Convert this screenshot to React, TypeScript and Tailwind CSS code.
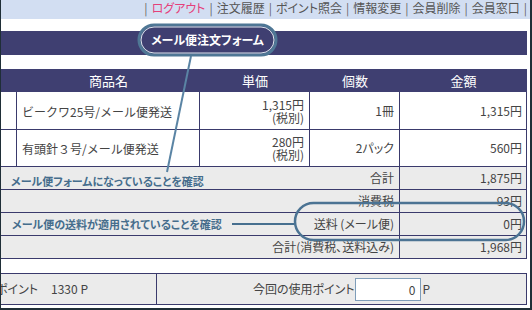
const navItems = ["ログアウト", "注文履歴", "ポイント照会", "情報変更", "会員削除", "会員窓口"];

const items = [
  { name: "ビークワ25号/メール便発送", price: "1,315円", qty: "1冊", amount: "1,315円" },
  { name: "有頭針３号/メール便発送", price: "280円", qty: "2パック", amount: "560円" },
];

const totals = [
  ["合計", "1,875円"],
  ["消費税", "93円"],
  ["送料 (メール便)", "0円"],
  ["合計(消費税、送料込み)", "1,968円"],
];

export default function App() {
  return (
    <div className="relative w-[532px] h-[310px] overflow-hidden bg-white border-l border-r-2 border-b-2 border-[#1f2e37] font-['Noto_Sans_CJK_JP',sans-serif] [font-feature-settings:'palt'] text-[#444]">
      {/* top links */}
      <nav className="h-[19px] bg-[#d2def2] flex justify-end items-start pr-[3px] text-[12px] leading-[16px] text-[#555]">
        {navItems.map((label) => (
          <span key={label} className="flex">
            <span className="mx-[4px] text-[#666]">|</span>
            <span className={label === "ログアウト" ? "text-[#e5407a]" : ""}>{label}</span>
          </span>
        ))}
        <span className="ml-[4px] text-[#666]">|</span>
      </nav>

      {/* title band */}
      <div className="mt-[12px] h-[24px] w-[526px] bg-[#3f3f71]" />

      {/* order table */}
      <div className="mt-[14px] w-[526px] text-[12px]">
        <div className="flex h-[23px] items-center bg-[#3f3f71] text-white text-[13px]">
          <div className="w-[16px]" />
          <div className="w-[183px] text-center">商品名</div>
          <div className="w-[110px] text-center">単価</div>
          <div className="w-[90px] text-center">個数</div>
          <div className="w-[127px] text-center">金額</div>
        </div>

        {items.map((it, i) => (
          <div
            key={it.name}
            className={`flex border-b border-[#3a3a6c] ${i === 0 ? "h-[38px]" : "h-[37px]"}`}
          >
            <div className="w-[16px] border-r border-[#3a3a6c]" />
            <div className="w-[183px] border-r border-[#3a3a6c] flex items-center pl-[5px] pt-[2px] [font-feature-settings:normal]">
              {it.name}
            </div>
            <div className="w-[110px] border-r border-[#3a3a6c] flex flex-col justify-center items-end pr-[5px] leading-[13px]">
              <span>{it.price}</span>
              <span>(税別)</span>
            </div>
            <div className="w-[90px] border-r border-[#3a3a6c] flex items-center justify-end pr-[5px]">{it.qty}</div>
            <div className="w-[127px] border-r border-[#3a3a6c] flex items-center justify-end pr-[4px]">{it.amount}</div>
          </div>
        ))}

        {totals.map(([label, value]) => (
          <div key={label} className="flex h-[23px] bg-[#ebebeb] border-b border-[#3a3a6c]">
            <div className="w-[399px] border-r border-[#3a3a6c] flex items-center justify-end pr-[5px]">{label}</div>
            <div className="w-[127px] border-r border-[#3a3a6c] flex items-center justify-end pr-[4px]">{value}</div>
          </div>
        ))}

        {/* points */}
        <div className="mt-[14px] flex h-[32px] bg-[#ebebeb] border-y border-[#3a3a6c]">
          <div className="w-[156px] border-r border-[#3a3a6c] flex items-center overflow-hidden">
            <span className="ml-[-5px] whitespace-nowrap">ポイント</span>
            <span className="ml-[13px] whitespace-nowrap">1330 P</span>
          </div>
          <div className="w-[370px] border-r border-[#3a3a6c] flex items-center justify-center">
            <span>今回の使用ポイント</span>
            <input
              readOnly
              value="0"
              className="w-[66px] h-[23px] border border-[#7f9db9] bg-white text-right pr-[4px] text-[12px] text-[#444] outline-none"
            />
            <span className="ml-[2px]">P</span>
          </div>
        </div>
      </div>

      {/* annotations */}
      <svg className="absolute -left-px top-0 pointer-events-none" width="532" height="310">
        <line x1="191" y1="56" x2="167" y2="172" stroke="#5a84a4" strokeWidth="2" />
        <rect x="139" y="25" width="137" height="30" rx="15" fill="#3f3f71" stroke="#4f7795" strokeWidth="3" />
        <rect x="141" y="27" width="133" height="26" rx="13" fill="none" stroke="#dfe7ef" strokeWidth="1" />
        <line x1="232" y1="224" x2="294" y2="224" stroke="#466f8f" strokeWidth="2" />
        <rect x="295" y="203" width="229" height="37" rx="18.5" fill="none" stroke="#4b7393" strokeWidth="2.5" />
      </svg>
      <div className="absolute left-[137px] top-[24px] w-[139px] h-[32px] flex items-center justify-center text-white font-bold text-[12px]">
        メール便注文フォーム
      </div>
      <div className="absolute left-[10px] top-[174px] leading-[14px] font-bold text-[11px] text-[#456d8c] whitespace-nowrap">
        メール便フォームになっていることを確認
      </div>
      <div className="absolute left-[11px] top-[217px] leading-[14px] font-bold text-[11px] text-[#456d8c] whitespace-nowrap">
        メール便の送料が適用されていることを確認
      </div>
    </div>
  );
}
